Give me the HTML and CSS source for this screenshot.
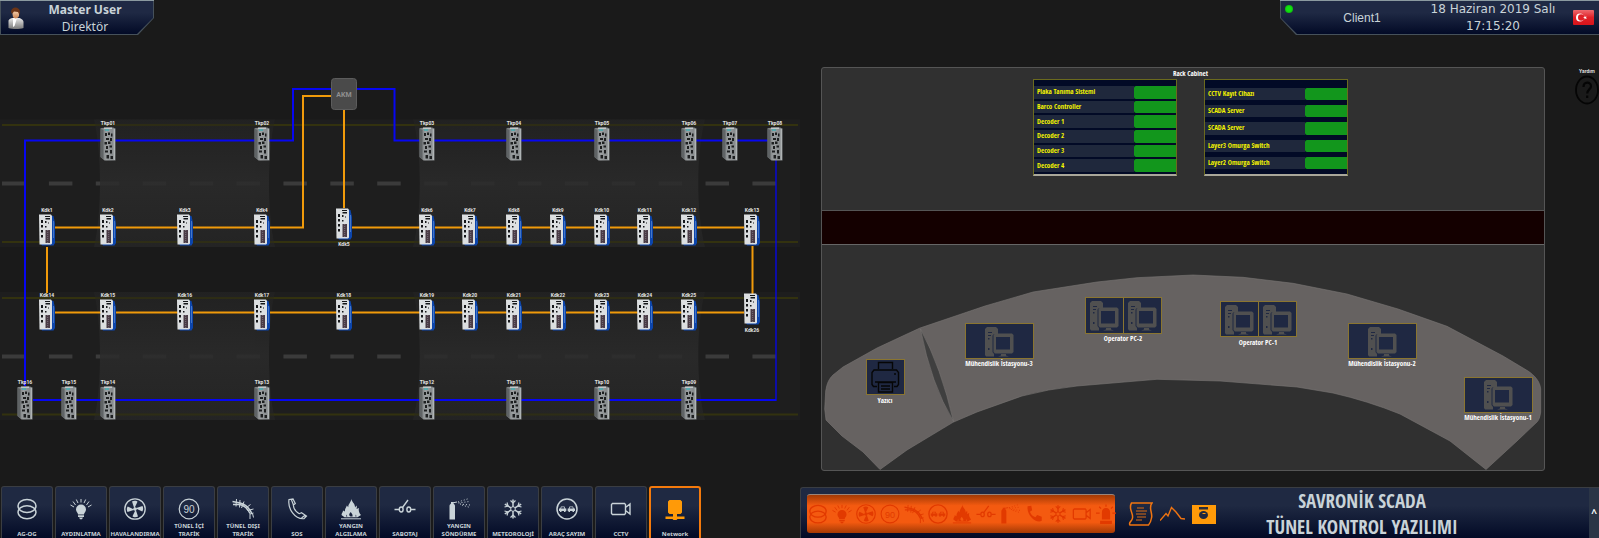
FILE: index.html
```html
<!DOCTYPE html>
<html lang="tr">
<head>
<meta charset="utf-8">
<meta name="viewport" content="width=device-width, initial-scale=1">
<title>SAVRONİK SCADA</title>
<link rel="stylesheet" href="styles.css">
</head>
<body>
<svg class="sprite" aria-hidden="true">
  <defs>
    <linearGradient id="steel"><stop offset="0" stop-color="#6d7173"/><stop offset=".4" stop-color="#9b9fa1"/><stop offset="1" stop-color="#7e8284"/></linearGradient>
    <linearGradient id="skin" x2="0" y2="1"><stop offset="0" stop-color="#f3cfae"/><stop offset="1" stop-color="#c9814f"/></linearGradient>
    <linearGradient id="coat" x2="0" y2="1"><stop offset="0" stop-color="#e8e8e8"/><stop offset="1" stop-color="#7a7a7a"/></linearGradient>
    <linearGradient id="flagred" x2="0" y2="1"><stop offset="0" stop-color="#ee6a6e"/><stop offset=".5" stop-color="#e02027"/><stop offset="1" stop-color="#d8141b"/></linearGradient>
    <linearGradient id="tube" x2="0" y2="1"><stop offset="0" stop-color="#222"/><stop offset=".5" stop-color="#2b2b2b"/><stop offset="1" stop-color="#252525"/></linearGradient>
  </defs>
  <symbol id="i-rings" viewBox="0 0 22 22"><g fill="none" stroke="currentColor" stroke-width="1.5"><ellipse cx="11" cy="8" rx="9" ry="6.5"/><ellipse cx="11" cy="14.3" rx="9" ry="6.5"/></g></symbol>
  <symbol id="i-bulb" viewBox="0 0 22 22"><path fill="currentColor" d="M11 6.500a5 5 0 0 1 5 5c0 2.400-2 3.200-2 5H8c0-1.800-2-2.600-2-5a5 5 0 0 1 5-5zM8 17.300h6v1.600H8zM9 19.400h4l-1 1.800h-2z"/><path stroke="currentColor" stroke-width="1" d="M11 1v3.500M6.300 1.500 8 5M15.700 1.500 14 5M3 3.500 5.500 7M19 3.500 16.500 7M.5 7l3.500 2M21.500 7 18 9"/></symbol>
  <symbol id="i-fan" viewBox="0 0 22 22"><circle cx="11" cy="11" r="10.200" fill="none" stroke="currentColor" stroke-width="1.300"/><g fill="currentColor"><circle cx="11" cy="11" r="1.800"/><path d="M10.300 10.500 8 3.500c2-1 4.500-.8 5.500.3z"/><path d="M11.500 10.300 18.500 8c1 2 .8 4.500-.3 5.500z"/><path d="M11.700 11.500 14 18.500c-2 1-4.500.8-5.500-.3z"/><path d="M10.500 11.700 3.500 14c-1-2-.8-4.500.3-5.500z"/></g></symbol>
  <symbol id="i-road" viewBox="0 0 22 22"><g fill="none" stroke="currentColor"><path stroke-width="1.500" d="M.5 3.500 8 5c6 1.500 9.500 5 12 11"/><path stroke-width="1.500" d="M1 6.500 7 6.500c5 .5 8.500 4 11 9"/><path stroke-width="1" d="M4.500 1 4 8.500M8 2 7.500 9.500M12 3.500 9.500 10M14.500 9.500l4-3M15.500 12.500l6-1.500M18 16l3.500-1M18 15.500V21M20.500 15.500l1 4"/></g></symbol>
  <symbol id="i-phone" viewBox="0 0 22 22"><path fill="none" stroke="currentColor" stroke-width="1.200" d="M3 1.500 7 1l2.300 4.500-2 1.500c.4 3.500 3 7.200 6 8.700l2.200-1L20.500 18 18 20.700C9 21.500 1.500 11 3 1.500zM7 1 5.500 2l2 5M20.500 18l-2-.3-3 2.300"/></symbol>
  <symbol id="i-handset" viewBox="0 0 22 22"><path fill="currentColor" d="M4 2.500 8 2l1 5-2.500 1.500c1 3 3 5 6 6L14.500 12l5 2v4.500C14 22 2.500 13 4 2.500z"/></symbol>
  <symbol id="i-fire" viewBox="0 0 22 22"><path fill="currentColor" d="M11.500.5c-.5 3 4 5 3.500 9l1.500-2c.8 1.500 0 3.500 0 3.500l2.500-1c-.5 2-.5 4 2 7l-3.500 2.300H4.500L1.500 17c0-2 1.500-2.500 1.500-4.500l2 1c-.5-3 1.500-4 1.800-6l1.500 1.800C8 6 11 4.500 11.500.5z"/><path fill="var(--hole)" d="M10.500 18.500c-2-1-1.500-3 .5-4.500 0 1.500 2 1.500 1.500 4.500zM6 18.500l.7-2 .6 2zM15.300 18.500l.6-2 .6 2z"/><path fill="currentColor" d="M1 20.300h20v1H1z"/></symbol>
  <symbol id="i-switch" viewBox="0 0 22 22"><g fill="none" stroke="currentColor" stroke-width="1.400"><path d="M.5 11.500h4.500M17 11.500h4.500M8.500 9.500 14 2"/><ellipse cx="7.200" cy="11.500" rx="1.900" ry="2.500"/><ellipse cx="14.800" cy="11.500" rx="1.900" ry="2.500"/></g></symbol>
  <symbol id="i-ext" viewBox="0 0 22 22"><path fill="currentColor" d="M1.500 21.500V8c0-1.500 1-2 1.500-2.500V4h2.500v1.500C6 6 7 6.500 7 8v13.500z"/><path stroke="currentColor" stroke-width="1" d="M4 5 9 4"/><path stroke="currentColor" stroke-width="1" stroke-dasharray="1 2" fill="none" d="M10 4 21 .5M10.500 5l11-1.500M12 6l10 1M14 7l8 2.500"/></symbol>
  <symbol id="i-snow" viewBox="0 0 22 22"><g fill="none" stroke="currentColor" stroke-width="1.500"><path d="M11 1.500v19M2.800 6.200l16.400 9.600M2.800 15.800 19.200 6.200"/><path stroke-width="1.200" d="M8.500 2.500 11 5l2.500-2.500M8.500 19.500 11 17l2.500 2.500M2.500 9 6 8 5 4.500M19.500 9 16 8l1-3.500M2.500 13l3.500 1-1 3.500M19.500 13 16 14l1 3.500"/></g><circle cx="11" cy="11" r="2.300" fill="var(--hole)" stroke="currentColor"/></symbol>
  <symbol id="i-cars" viewBox="0 0 22 22"><circle cx="11" cy="11" r="10" fill="none" stroke="currentColor" stroke-width="1.500"/><path fill="currentColor" d="M3 10.500h1.200l.8-2h3.500l.8 2h1V13h-.8v1H8v-1H5.500v1H4v-1H3zM11.700 10.500h1l.8-2H17l.8 2H19V13h-1v1h-1.500v-1H14v1h-1.500v-1h-.8z"/><path fill="var(--hole)" d="M5.500 9.300H8l.4 1.200H5.100zM14 9.300h2.500l.4 1.200h-3.300z"/></symbol>
  <symbol id="i-cam" viewBox="0 0 22 22"><path fill="none" stroke="currentColor" stroke-width="1.400" d="M2.500 5.500h12l1 1v9l-1 1h-12l-1-1v-9zM15.500 9.500 20 6v10l-4.500-3.500z"/></symbol>
  <symbol id="i-net" viewBox="0 0 22 22"><path fill="currentColor" d="M5.500 2h11L18 3.500v11L16.500 16H13v2.500h7.500V21H13.500l-1 1h-3l-1-1H1.500v-2.500H9V16H5.500L4 14.500v-11z"/></symbol>
  <symbol id="i-siren" viewBox="0 0 22 22"><path fill="currentColor" d="M6.500 17V9c0-6 9-6 9 0v8zM4.500 18.500h13V22h-13z"/><path stroke="currentColor" stroke-width="1.300" d="M11 .5v2.500M3.500 3l2 2M18.500 3l-2 2M0 10h4M18 10h4"/></symbol>
  <symbol id="tkp" viewBox="0 0 16 34"><path fill="url(#steel)" d="M.5 1 13 .5l2.500 1V33.500H4.500L.5 30z"/><path fill="#5f6365" d="M.5 2 3.500 3v29L.5 30z"/><path fill="#c2c6c8" d="M4 .5h8v1.500H4zM13.700 2h1v31h-1z"/><path fill="#17b3b8" d="M5 2.500h4v1H5z"/><g fill="#1d1f20"><path d="M5 6h2v3H5zM8 5.500h2v2.500H8zM11 6.500h1.500v3H11zM6 11h3v2H6zM10 11h2v3h-2zM4.500 15h2.500v2.500H4.500zM8 14.500h2.500V17H8zM6 19h2v3H6zM9.500 18.500H12v2H9.500zM5 23.500h3v2H5zM10 23h2v3.500h-2zM6.500 28H9v3.500H6.500zM10.500 29H13v3h-2.500z"/></g></symbol>
  <symbol id="kdk" viewBox="0 0 16 33"><path fill="#0c45ac" d="M12 1.500 14.500 2 16 9v20l-1.500 2.500H3L2 30z"/><path fill="#dcdfe1" d="M0 .5h12l1 1.500v27.500l-1 1H.5z"/><path fill="#5f8cd0" d="M14.300 7h.7v17h-.7z"/><g fill="#15171a"><path d="M2 6h2v3H2zM2 11h2v2.500H2zM2 16h2v2.500H2zM2 21h2v2.500H2zM6 2h5v1H6zM6.500 4H11v1.500H6.500zM6 7h1.500v2H6zM9 8.500h1v1H9zM6 12h1.500v1.500H6z"/></g><path fill="#4a3c46" d="M6.500 16h4.500v13H6.500z"/><path stroke="#9c94a0" stroke-width=".6" stroke-dasharray="1 1" d="M8.700 16v13"/></symbol>
  <symbol id="pc" viewBox="0 0 29 30"><path fill="#505050" d="M2 0h9l2 2v5H9L7.500 8.500V25L9 27v2.500H1L0 28V2z"/><path fill="#1f2842" d="M3 5h4v1H3zM3 8h3v1H3zM3 11h1.500v1.500H3zM3 21h1.500v2H3z"/><path fill="#505050" d="M10 6.500h17l1.500 1.500v17L27 26.500H10L8.500 25V8z"/><path fill="#1f2842" d="M11 10h14v12.500H11z"/><path fill="#505050" d="M16 27h5v1.500l3 1H13l3-1z"/></symbol>
</svg>

<header class="top">
  <div class="badge badge-user">
    <svg class="avatar" viewBox="0 0 16 22" aria-hidden="true"><path fill="url(#coat)" d="M.5 21V14c0-2 3-3 4-3h6c2 0 5 2 5 4v6c-4 1.300-11 1.300-15 0z"/><path fill="#fff" d="M5 11h4l-2.500 8-1.500 1z"/><path fill="url(#skin)" d="M4 4h7v5c-1 3-5 3-6 1z"/><path fill="#6b3416" d="M3 5c0-6 9-6 9 0l-.5 3-1.500-3-4-.5L4 7z"/></svg>
    <div class="lines"><strong>Master User</strong><span>Direktör</span></div>
  </div>
  <div class="badge badge-client">
    <span class="led"></span>
    <span class="client">Client1</span>
    <div class="lines lines-date"><span>18 Haziran 2019 Salı</span><span>17:15:20</span></div>
    <svg class="flag" viewBox="0 0 21 15" role="img" aria-label="Türkçe"><rect width="21" height="15" rx="1" fill="url(#flagred)"/><circle cx="7" cy="7.500" r="4" fill="#fff"/><circle cx="8.200" cy="7.500" r="3.200" fill="#e02027"/><path fill="#fff" d="m10 7.500 1.500-.4.300-1.500.8 1.300 1.400-.3-1 1 .9 1.200-1.400-.4-.9 1.200-.1-1.500z"/></svg>
  </div>
</header>

<main class="stage">
  <svg class="topology" viewBox="0 35 800 435" role="img" aria-label="Tünel ağ topolojisi">
    <g fill="#1e1e1e"><path d="M0 119.500h800V247H0zM0 292h800v128H0z"/></g>
    <g stroke="#33320f" stroke-width="2"><path d="M2 125h796M2 242h796M2 298h796M2 414.500h796"/></g>
    <g stroke="#3b3b3b" stroke-width="4" stroke-dasharray="23.500 23.400"><path d="M2 183.500h774M2 356.500h774"/></g>
    <g fill="url(#tube)" opacity=".85">
      <path d="M94 119.500h181c-8 34-8 94 0 127.500H94c8-34 8-94 0-127.500z"/>
      <path d="M413 119.500h292c-9 34-9 94 0 127.500H413c9-34 9-94 0-127.500z"/>
      <path d="M94 292h181c-8 34-8 94 0 128H94c8-34 8-94 0-128z"/>
      <path d="M413 292h292c-9 34-9 94 0 128H413c9-34 9-94 0-128z"/>
    </g>
    <g stroke="#33320f" stroke-width="2" opacity=".6"><path d="M94 125h181M94 242h181M413 125h292M413 242h292M94 298h181M94 414.500h181M413 298h292M413 414.500h292"/></g>
    <g fill="none" stroke="#0606f2" stroke-width="2"><path d="M25 386V140.500h268V89h39M357 89h37.500v51.500H768M33 400h743"/><path stroke-width="1.300" d="M776 160v241"/></g>
    <g fill="none" stroke="#f09a0a" stroke-width="2"><path d="M332 96h-29v131.500H55M344 109v99M352 227.500h392M47 247v46M752.500 246v48M55 312.500h689"/></g>
    <rect x="331.500" y="78.500" width="25" height="31" rx="3" fill="#4a4a4a" stroke="#5c5c5c"/>
    <text class="t-akm" x="344" y="97">AKM</text>
    <g class="t-node">
      <g transform="translate(100 127)"><use href="#tkp" width="16" height="34"/><text x="8" y="-2">Tkp01</text></g>
      <g transform="translate(254 127)"><use href="#tkp" width="16" height="34"/><text x="8" y="-2">Tkp02</text></g>
      <g transform="translate(419 127)"><use href="#tkp" width="16" height="34"/><text x="8" y="-2">Tkp03</text></g>
      <g transform="translate(506 127)"><use href="#tkp" width="16" height="34"/><text x="8" y="-2">Tkp04</text></g>
      <g transform="translate(594 127)"><use href="#tkp" width="16" height="34"/><text x="8" y="-2">Tkp05</text></g>
      <g transform="translate(681 127)"><use href="#tkp" width="16" height="34"/><text x="8" y="-2">Tkp06</text></g>
      <g transform="translate(722 127)"><use href="#tkp" width="16" height="34"/><text x="8" y="-2">Tkp07</text></g>
      <g transform="translate(767 127)"><use href="#tkp" width="16" height="34"/><text x="8" y="-2">Tkp08</text></g>

      <g transform="translate(17 386)"><use href="#tkp" width="16" height="34"/><text x="8" y="-2">Tkp16</text></g>
      <g transform="translate(61 386)"><use href="#tkp" width="16" height="34"/><text x="8" y="-2">Tkp15</text></g>
      <g transform="translate(100 386)"><use href="#tkp" width="16" height="34"/><text x="8" y="-2">Tkp14</text></g>
      <g transform="translate(254 386)"><use href="#tkp" width="16" height="34"/><text x="8" y="-2">Tkp13</text></g>
      <g transform="translate(419 386)"><use href="#tkp" width="16" height="34"/><text x="8" y="-2">Tkp12</text></g>
      <g transform="translate(506 386)"><use href="#tkp" width="16" height="34"/><text x="8" y="-2">Tkp11</text></g>
      <g transform="translate(594 386)"><use href="#tkp" width="16" height="34"/><text x="8" y="-2">Tkp10</text></g>
      <g transform="translate(681 386)"><use href="#tkp" width="16" height="34"/><text x="8" y="-2">Tkp09</text></g>

      <g transform="translate(39 214)"><use href="#kdk" width="16" height="33"/><text x="8" y="-2">Kdk1</text></g>
      <g transform="translate(100 214)"><use href="#kdk" width="16" height="33"/><text x="8" y="-2">Kdk2</text></g>
      <g transform="translate(177 214)"><use href="#kdk" width="16" height="33"/><text x="8" y="-2">Kdk3</text></g>
      <g transform="translate(254 214)"><use href="#kdk" width="16" height="33"/><text x="8" y="-2">Kdk4</text></g>
      <g transform="translate(336 208)"><use href="#kdk" width="16" height="33"/><text x="8" y="38">Kdk5</text></g>
      <g transform="translate(419 214)"><use href="#kdk" width="16" height="33"/><text x="8" y="-2">Kdk6</text></g>
      <g transform="translate(462 214)"><use href="#kdk" width="16" height="33"/><text x="8" y="-2">Kdk7</text></g>
      <g transform="translate(506 214)"><use href="#kdk" width="16" height="33"/><text x="8" y="-2">Kdk8</text></g>
      <g transform="translate(550 214)"><use href="#kdk" width="16" height="33"/><text x="8" y="-2">Kdk9</text></g>
      <g transform="translate(594 214)"><use href="#kdk" width="16" height="33"/><text x="8" y="-2">Kdk10</text></g>
      <g transform="translate(637 214)"><use href="#kdk" width="16" height="33"/><text x="8" y="-2">Kdk11</text></g>
      <g transform="translate(681 214)"><use href="#kdk" width="16" height="33"/><text x="8" y="-2">Kdk12</text></g>
      <g transform="translate(744 214)"><use href="#kdk" width="16" height="33"/><text x="8" y="-2">Kdk13</text></g>

      <g transform="translate(39 299)"><use href="#kdk" width="16" height="33"/><text x="8" y="-2">Kdk14</text></g>
      <g transform="translate(100 299)"><use href="#kdk" width="16" height="33"/><text x="8" y="-2">Kdk15</text></g>
      <g transform="translate(177 299)"><use href="#kdk" width="16" height="33"/><text x="8" y="-2">Kdk16</text></g>
      <g transform="translate(254 299)"><use href="#kdk" width="16" height="33"/><text x="8" y="-2">Kdk17</text></g>
      <g transform="translate(336 299)"><use href="#kdk" width="16" height="33"/><text x="8" y="-2">Kdk18</text></g>
      <g transform="translate(419 299)"><use href="#kdk" width="16" height="33"/><text x="8" y="-2">Kdk19</text></g>
      <g transform="translate(462 299)"><use href="#kdk" width="16" height="33"/><text x="8" y="-2">Kdk20</text></g>
      <g transform="translate(506 299)"><use href="#kdk" width="16" height="33"/><text x="8" y="-2">Kdk21</text></g>
      <g transform="translate(550 299)"><use href="#kdk" width="16" height="33"/><text x="8" y="-2">Kdk22</text></g>
      <g transform="translate(594 299)"><use href="#kdk" width="16" height="33"/><text x="8" y="-2">Kdk23</text></g>
      <g transform="translate(637 299)"><use href="#kdk" width="16" height="33"/><text x="8" y="-2">Kdk24</text></g>
      <g transform="translate(681 299)"><use href="#kdk" width="16" height="33"/><text x="8" y="-2">Kdk25</text></g>
      <g transform="translate(744 293)"><use href="#kdk" width="16" height="33"/><text x="8" y="39">Kdk26</text></g>
    </g>
  </svg>

  <div class="room-side">
    <section class="room">
      <div class="racks">
        <h2>Rack Cabinet</h2>
        <div class="rack-pair">
          <table class="rack">
            <tr><th scope="row">Plaka Tanıma Sistemi</th><td></td></tr>
            <tr><th scope="row">Barco Controller</th><td></td></tr>
            <tr><th scope="row">Decoder 1</th><td></td></tr>
            <tr><th scope="row">Decoder 2</th><td></td></tr>
            <tr><th scope="row">Decoder 3</th><td></td></tr>
            <tr><th scope="row">Decoder 4</th><td></td></tr>
          </table>
          <table class="rack rack-wide">
            <tr><th scope="row">CCTV Kayıt Cihazı</th><td></td></tr>
            <tr><th scope="row">SCADA Server</th><td></td></tr>
            <tr><th scope="row">SCADA Server</th><td></td></tr>
            <tr><th scope="row">Layer3 Omurga Switch</th><td></td></tr>
            <tr><th scope="row">Layer2 Omurga Switch</th><td></td></tr>
          </table>
        </div>
      </div>
      <div class="videowall"></div>
      <svg class="desk" viewBox="822 246 722 225" role="img" aria-label="Operatör masası">
        <path fill="#666261" stroke="#7a7775" stroke-width=".6" d="M880 470.500 863 453 842 437 826 421 824.700 410 825.700 392C827 384 829 380 833 376L843 368 877 349 907 335 920 329 985 307 1033 293 1097 283 1137 278.700 1193 276 1243 278.300 1293 284.300 1347 295 1398 310 1447 327.300 1503 357 1528 372C1534 376 1540 382 1540.700 390V413C1540 418 1539 421 1537 423L1517 442 1486 470.500 1450 442 1400 415Q1368 402 1333 394L1297 388 1220 382 1157 380.300 1077 387Q1048 390 1022 397L977 413 953 423.300 907 451z"/>
        <path fill="#3f3f3f" stroke="#807d7b" stroke-width=".5" d="M920.500 330Q941 368 953.500 422.500 931 385 920.500 330z"/>
        <g fill="#1f2842" stroke="#8a7530">
          <rect x="866.500" y="360.500" width="38" height="35"/>
          <rect x="965.500" y="324.500" width="68" height="35"/>
          <rect x="1085.500" y="298.500" width="38" height="36"/><rect x="1123.500" y="298.500" width="38" height="36"/>
          <rect x="1220.500" y="302.500" width="38" height="35"/><rect x="1258.500" y="302.500" width="38" height="35"/>
          <rect x="1348.500" y="324.500" width="68" height="35"/>
          <rect x="1464.500" y="378.500" width="68" height="35"/>
        </g>
        <g fill="none" stroke="#060606" stroke-width="1.400"><path d="M878.500 370v-6.500h14v6.500M877 387.500h-3.500l-1.500-2v-12l2-2.500h22.500l2 2.500v12l-1.500 2H894"/><path d="M878.500 383.500h14v9.500h-14zM875 383h21M881 387h9M881 390h9M894 375h2"/></g>
        <use href="#pc" x="985" y="328" width="29" height="30"/>
        <use href="#pc" x="1090" y="302" width="29" height="30"/><use href="#pc" x="1128" y="302" width="29" height="30"/>
        <use href="#pc" x="1225" y="306" width="29" height="30"/><use href="#pc" x="1263" y="306" width="29" height="30"/>
        <use href="#pc" x="1368" y="328" width="29" height="30"/>
        <use href="#pc" x="1484" y="381" width="29" height="30"/>
        <g class="t-desk">
          <text x="885" y="404">Yazıcı</text>
          <text x="999" y="367">Mühendislik İstasyonu-3</text>
          <text x="1123" y="342">Operator PC-2</text>
          <text x="1258" y="346">Operator PC-1</text>
          <text x="1382" y="367">Mühendislik İstasyonu-2</text>
          <text x="1498" y="421">Mühendislik İstasyonu-1</text>
        </g>
      </svg>
    </section>
    <button class="help" type="button">Yardım
      <svg viewBox="0 0 24 30" aria-hidden="true"><g fill="none" stroke="#050505"><ellipse cx="12" cy="15" rx="11" ry="13.500" stroke-width="1.800"/><path stroke-width="2.200" d="M8.500 12c0-6 7.500-5.500 7.500-.8 0 3-3.800 3.500-3.800 7.300M12.200 20.500v2.500"/></g></svg>
    </button>
  </div>
</main>

<footer class="bottom">
  <nav class="menu">
    <button type="button"><svg><use href="#i-rings"/></svg><span>AG-OG</span></button>
    <button type="button"><svg><use href="#i-bulb"/></svg><span>AYDINLATMA</span></button>
    <button type="button"><svg><use href="#i-fan"/></svg><span>HAVALANDIRMA</span></button>
    <button type="button"><svg viewBox="0 0 22 22"><circle cx="11" cy="11" r="9.800" fill="none" stroke="currentColor" stroke-width="1.200"/><text class="t-speed" x="11" y="15">90</text></svg><span>TÜNEL İÇİ<br>TRAFİK</span></button>
    <button type="button"><svg><use href="#i-road"/></svg><span>TÜNEL DIŞI<br>TRAFİK</span></button>
    <button type="button"><svg><use href="#i-phone"/></svg><span>SOS</span></button>
    <button type="button"><svg><use href="#i-fire"/></svg><span>YANGIN<br>ALGILAMA</span></button>
    <button type="button"><svg><use href="#i-switch"/></svg><span>SABOTAJ</span></button>
    <button type="button"><svg><use href="#i-ext"/></svg><span>YANGIN<br>SÖNDÜRME</span></button>
    <button type="button"><svg><use href="#i-snow"/></svg><span>METEOROLOJİ</span></button>
    <button type="button"><svg><use href="#i-cars"/></svg><span>ARAÇ SAYIM</span></button>
    <button type="button"><svg><use href="#i-cam"/></svg><span>CCTV</span></button>
    <button type="button" class="active" aria-current="page"><svg><use href="#i-net"/></svg><span>Network</span></button>
  </nav>
  <div class="status">
    <div class="alarms">
      <svg><use href="#i-rings"/></svg><svg><use href="#i-bulb"/></svg><svg><use href="#i-fan"/></svg><svg viewBox="0 0 22 22"><circle cx="11" cy="11" r="9.800" fill="none" stroke="currentColor" stroke-width="1.200"/><text class="t-speed" x="11" y="15">90</text></svg><svg><use href="#i-road"/></svg><svg><use href="#i-cars"/></svg><svg><use href="#i-fire"/></svg><svg><use href="#i-switch"/></svg><svg><use href="#i-ext"/></svg><svg><use href="#i-handset"/></svg><svg><use href="#i-snow"/></svg><svg><use href="#i-cam"/></svg><svg><use href="#i-siren"/></svg>
    </div>
    <div class="tools">
      <button type="button" aria-label="Rapor"><svg viewBox="0 0 25 24"><g fill="none" stroke="#ef7411" stroke-width="1.500"><path d="M3.500 1H24c-4 5 1 10-.5 15-.5 3-1 5-3 7H2c-2-3 2-3 2.500-7C5.500 11 0 7 3.500 1z"/><path stroke-width=".9" d="M9 6h7M8 9h11M8 12h10M9 15h9M8 18h6"/></g></svg></button>
      <button type="button" aria-label="Trend"><svg viewBox="0 0 25 24"><path fill="none" stroke="#ef7411" stroke-width="1.400" d="M0 18.500 6 11.500l2 2.500 3.500-8.500 4.500 4.500 5 6.500 4 .5"/></svg></button>
      <button type="button" aria-label="Yazdır"><svg viewBox="0 0 25 24"><path fill="#ff9a08" d="M0 3h24v19H0z"/><path fill="#2a2c38" d="M7 5h9v2.500H7z"/><ellipse cx="11.500" cy="13" rx="4.500" ry="4" fill="#1f2740"/><path fill="#ff9a08" d="M10.500 11h3v1h-3z"/></svg></button>
    </div>
    <h1>SAVRONİK SCADA<br>TÜNEL KONTROL YAZILIMI</h1>
    <button type="button" class="expand" aria-label="Aç">^</button>
  </div>
</footer>
</body>
</html>
```

FILE: styles.css
```css
* { box-sizing: border-box; }

body {
  margin: 0;
  min-height: 100vh;
  display: flex;
  flex-direction: column;
  background: #1a1a1a;
  color: #c9d3d8;
  font-family: "Noto Sans", sans-serif;
}

button {
  margin: 0;
  padding: 0;
  border: 0;
  background: none;
  color: inherit;
  font: inherit;
  cursor: pointer;
}

svg { display: block; }
.sprite { position: absolute; width: 0; height: 0; }

.t-speed { font: 10px "Liberation Sans", sans-serif; fill: currentColor; text-anchor: middle; }
.t-akm { font: bold 7px "Liberation Sans Narrow", Roboto, sans-serif; fill: #8f8f8f; text-anchor: middle; }
.t-node { font: bold 5px "Liberation Sans Narrow", Roboto, sans-serif; fill: #e4e4e4; text-anchor: middle; }
.t-desk { font: bold 7px "Noto Sans Condensed", "Open Sans Condensed", "Liberation Sans Narrow", Roboto, sans-serif; fill: #fff; text-anchor: middle; }

/* header */
.top { display: flex; justify-content: space-between; height: 35px; }

.badge {
  position: relative;
  z-index: 0;
  display: flex;
  align-items: center;
  height: 35px;
  background: linear-gradient(#8b9aa0 0 1px, #46515a 1px);
}
.badge::before {
  content: "";
  position: absolute;
  z-index: -1;
  inset: 1px;
  background: linear-gradient(#1f2944 35%, #020a26);
}
.badge-user { width: 154px; padding-left: 8px; clip-path: polygon(0 0, 100% 0, 100% 18px, calc(100% - 16px) 100%, 0 100%); }
.badge-user::before { clip-path: polygon(0 0, 100% 0, 100% 17px, calc(100% - 16px) 100%, 0 100%); }
.badge-client { width: 319px; padding-right: 5px; clip-path: polygon(0 0, 100% 0, 100% 100%, 16px 100%, 0 18px); }
.badge-client::before { right: 0; clip-path: polygon(0 0, 100% 0, 100% 100%, 16px 100%, 0 17px); }

.avatar { width: 16px; height: 22px; }
.lines { flex: 1; display: flex; flex-direction: column; padding-top: 1px; font-size: 12px; line-height: 17px; text-align: center; }
.badge-user .lines { padding-right: 8px; }
.lines-date { font-family: "DejaVu Sans", sans-serif; }
.led { width: 8px; height: 8px; margin-left: 5px; align-self: flex-start; margin-top: 5px; border-radius: 50%; background: radial-gradient(#12e312 40%, #0a8f0a); }
.client { width: 120px; padding-left: 18px; text-align: center; font: 12px "Liberation Sans", sans-serif; }
.flag { width: 21px; height: 15px; }

/* main */
.stage { flex: 1; display: grid; grid-template-columns: 800fr 799fr; align-items: start; }
.topology { width: 100%; }

.room-side { display: flex; align-items: flex-start; padding: 32px 0 0 21px; }
.room { flex: 1; border: 1px solid #555; border-radius: 3px; background: #303030; overflow: hidden; }
.racks { height: 142px; padding-left: 15px; }
.racks h2 { margin: 0; font: bold 7px/11px "Noto Sans Condensed", "Open Sans Condensed", "Liberation Sans Narrow", Roboto, sans-serif; color: #fff; text-align: center; }
.rack-pair { display: flex; justify-content: center; gap: 27px; }

.rack {
  width: 144px;
  height: 97px;
  padding-top: 4px;
  border: 1px solid #6b6a1e;
  border-bottom: 2px solid #a9a79a;
  border-spacing: 0 2px;
  background: #020a26;
}
.rack-wide { border-spacing: 0 5px; padding-top: 3px; }
.rack th { padding: 0 0 0 3px; background: #1f283c; color: #f4f400; font: bold 7px/10px "Noto Sans Condensed", "Open Sans Condensed", "Liberation Sans Narrow", Roboto, sans-serif; text-align: left; }
.rack td { width: 42px; padding: 0; border-radius: 2px 0 0 2px; background: #12961c; }

.videowall { height: 35px; border-top: 1px solid #555; border-bottom: 1px solid #666; background: #140000; }
.desk { width: 100%; }

.help { width: 54px; padding-left: 30px; font: bold 5px/8px "Liberation Sans Narrow", Roboto, sans-serif; color: #ddd; text-align: center; }
.help svg { width: 24px; height: 30px; }

/* footer */
.bottom { display: grid; grid-template-columns: 800fr 799fr; align-items: end; margin-top: auto; }
.menu { --hole: #18213c; display: flex; gap: 2px; padding-left: 1px; }
.menu button {
  display: flex;
  flex-direction: column;
  align-items: center;
  justify-content: space-between;
  width: 52px;
  height: 52px;
  padding-top: 11px;
  border: 1px solid #3a3d42;
  border-bottom: 0;
  border-radius: 3px 3px 0 0;
  background: linear-gradient(#1f2942 35%, #020a26);
}
.menu svg { width: 22px; height: 22px; flex: none; }
.menu span { height: 18px; display: flex; align-items: flex-end; font-size: 6px; font-weight: bold; line-height: 8px; text-align: center; }
.menu .active { border: 2px solid #f47a0c; border-bottom: 0; padding-top: 10px; }
.menu .active svg { color: #ff9a08; }

.status { display: flex; align-items: flex-start; height: 51px; padding-top: 6px; padding-left: 6px; border: 1px solid #3a3d42; border-width: 1px 0 0 1px; border-radius: 3px 0 0; background: linear-gradient(#1f2942 35%, #020a26); }
.alarms {
  --hole: #f45a10;
  display: flex;
  gap: 4px;
  padding: 8px 0 8px 1px;
  width: 308px;
  height: 39px;
  flex: none;
  border-top: 1px solid #9c8478;
  border-radius: 3px;
  background: linear-gradient(#a33a05, #f45a10 28%, #f45a10 72%, #a33a05);
  color: #e23a00;
}
.alarms svg { width: 20px; height: 22px; flex: none; }
.tools { display: flex; gap: 7px; padding: 8px 0 0 13px; }
.tools svg { width: 25px; height: 24px; }
.status h1 { flex: 1; margin: -6px 0 0; padding-right: 82px; font: bold 19px/26px "Noto Sans Condensed", "Open Sans Condensed", "Liberation Sans Narrow", Roboto, sans-serif; text-align: center; white-space: nowrap; }
.expand { width: 10px; height: 50px; margin-top: -6px; background: #2b3546; font-size: 10px; font-weight: bold; color: #fff; }
```
